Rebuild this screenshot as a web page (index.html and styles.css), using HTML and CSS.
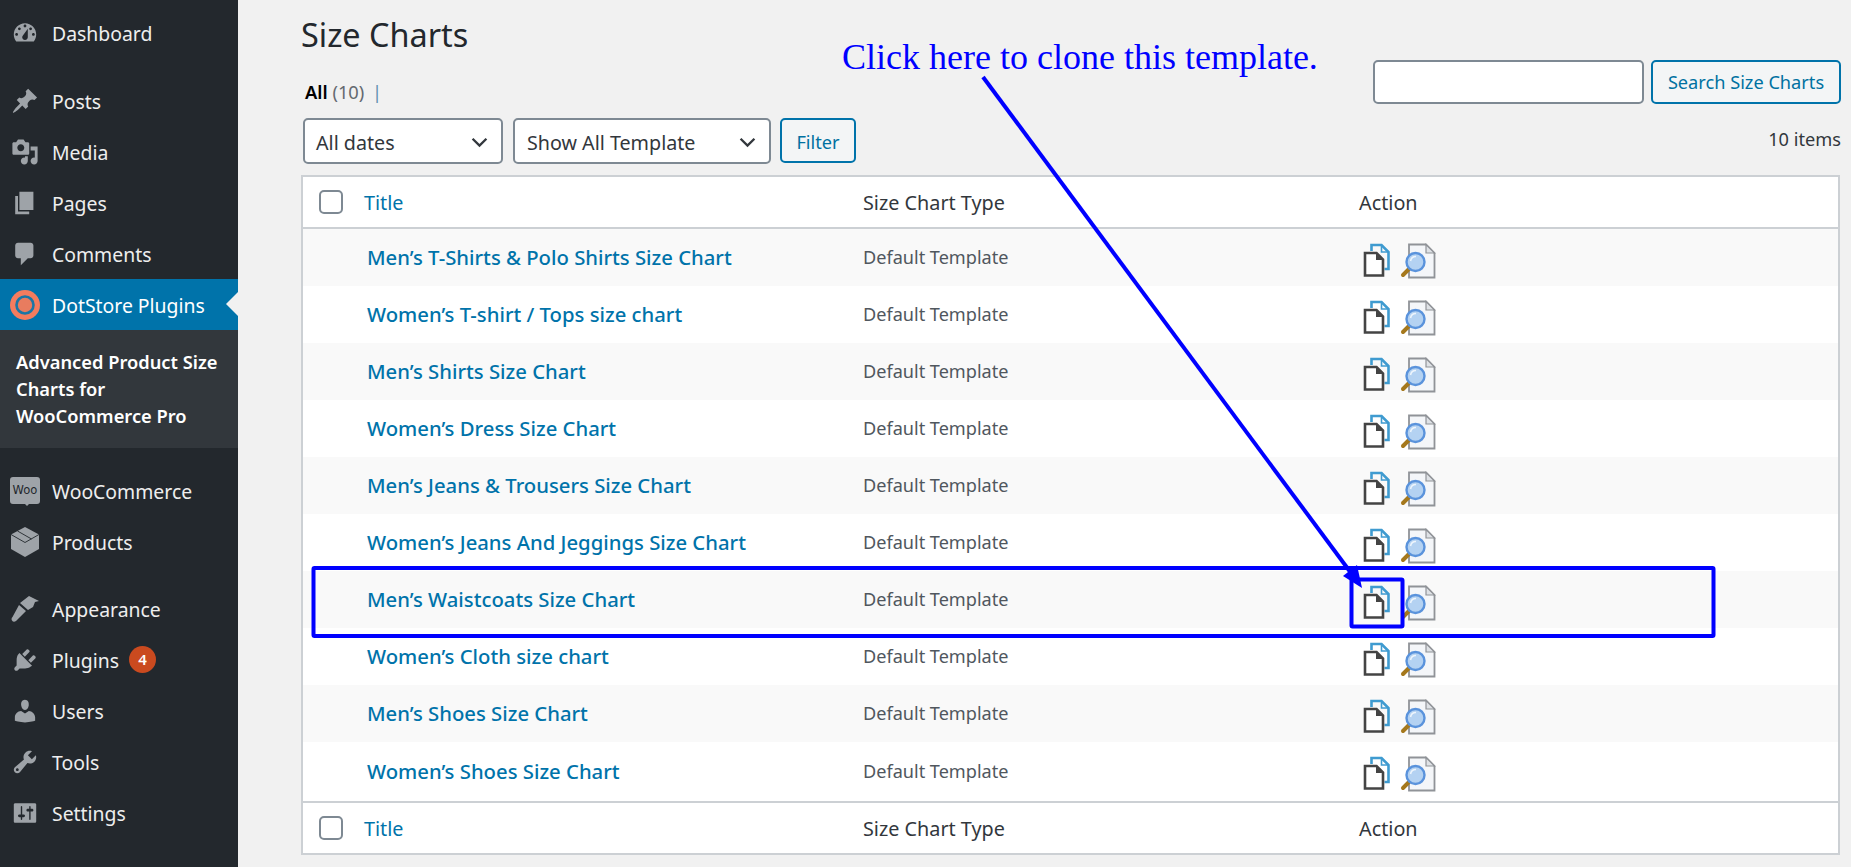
FILE: index.html
```html
<!DOCTYPE html>
<html lang="en">
<head>
    <meta charset="UTF-8">
    <title>Size Charts</title>
    <link rel="stylesheet" href="styles.css">
</head>
<body>
    <svg class="icon-defs" width="0" height="0">
        <symbol id="icon-clone" viewBox="0 0 28 34">
            <path d="M8.500 8V2h10l7 7v17h-4" fill="none" stroke="#3f9bd0" stroke-width="2.600"/>
            <path d="M18.500 2v7h7" fill="none" stroke="#3f9bd0" stroke-width="1.600"/>
            <path d="M2 10h11.500l6.500 6.500V32.500H2z" fill="#fff" stroke="#444" stroke-width="2.600"/>
            <path d="M13 10.500v6.500h6.500z" fill="#444"/>
        </symbol>
        <symbol id="icon-preview" viewBox="0 0 36 36">
            <path d="M9 1.500h17l8.500 8.500v24.500H9z" fill="#f4f6f9" stroke="#909398" stroke-width="1.800"/>
            <path d="M26 1.500V10h8.500z" fill="#dfe2e6" stroke="#909398" stroke-width="1.200"/>
            <path d="M9 26L3 32" stroke="#a5781c" stroke-width="4" stroke-linecap="round"/>
            <circle cx="15.500" cy="19" r="9" fill="#b4d2f2" stroke="#5a93dc" stroke-width="2.400"/>
            <path d="M10.500 18a5.500 5.500 0 0 1 5.500-4.500" fill="none" stroke="#eef5fc" stroke-width="1.600"/>
        </symbol>
    </svg>

    <div class="wrap">
        <!-- Admin menu -->
        <nav class="sidebar">
            <ul class="menu">
                <li class="menu-item">
                    <svg class="menu-icon" viewBox="0 0 20 20"><path fill-rule="evenodd" d="M3.760 16h12.480c1.100-1.370 1.760-3.110 1.760-5 0-4.420-3.580-8-8-8s-8 3.580-8 8c0 1.890.66 3.630 1.760 5zM10 4c.55 0 1 .45 1 1s-.45 1-1 1-1-.45-1-1 .45-1 1-1zM6 6c.55 0 1 .45 1 1s-.45 1-1 1-1-.45-1-1 .45-1 1-1zm8 0c.55 0 1 .45 1 1s-.45 1-1 1-1-.45-1-1 .45-1 1-1zm-5.370 5.550L12 7v6c0 1.100-.9 2-2 2s-2-.9-2-2c0-.57.24-1.080.63-1.450zM4 10c.55 0 1 .45 1 1s-.45 1-1 1-1-.45-1-1 .45-1 1-1zm12 0c.55 0 1 .45 1 1s-.45 1-1 1-1-.45-1-1 .45-1 1-1z"/></svg>
                    <span>Dashboard</span>
                </li>
            </ul>
            <ul class="menu">
                <li class="menu-item">
                    <svg class="menu-icon" viewBox="0 0 20 20"><path d="M10.440 3.020l1.820-1.820 6.360 6.350-1.830 1.820c-1.050-.68-2.480-.57-3.410.36l-.75.75c-.92.93-1.040 2.350-.35 3.410l-1.830 1.820-2.410-2.410-2.800 2.790c-.42.42-3.380 2.710-3.800 2.290s1.860-3.390 2.280-3.810l2.790-2.790L4.100 9.360l1.830-1.820c1.050.69 2.480.57 3.400-.36l.75-.75c.93-.92 1.050-2.350.36-3.410z"/></svg>
                    <span>Posts</span>
                </li>
                <li class="menu-item">
                    <svg class="menu-icon" viewBox="0 0 20 20"><path fill-rule="evenodd" d="M13 11V4c0-.55-.45-1-1-1h-1.670L9 1H5L3.670 3H2c-.55 0-1 .45-1 1v7c0 .55.45 1 1 1h10c.55 0 1-.45 1-1zM7 4.500c1.380 0 2.500 1.120 2.500 2.500S8.380 9.500 7 9.500 4.500 8.380 4.500 7 5.620 4.500 7 4.500zM14 6h5v10.500c0 1.380-1.120 2.500-2.500 2.500S14 17.880 14 16.500s1.120-2.500 2.500-2.500c.17 0 .34.020.5.050V9h-3V6zm-4 8.050V13h2v3.500c0 1.380-1.120 2.500-2.500 2.500S7 17.880 7 16.500 8.120 14 9.500 14c.17 0 .34.020.5.050z"/></svg>
                    <span>Media</span>
                </li>
                <li class="menu-item">
                    <svg class="menu-icon" viewBox="0 0 20 20"><path d="M6 15V2h10v13H6zm-1 1h8v2H3V5h2v11z"/></svg>
                    <span>Pages</span>
                </li>
                <li class="menu-item">
                    <svg class="menu-icon" viewBox="0 0 20 20"><path d="M5 2h9c1.100 0 2 .9 2 2v7c0 1.100-.9 2-2 2h-2l-5 5v-5H5c-1.100 0-2-.9-2-2V4c0-1.100.9-2 2-2z"/></svg>
                    <span>Comments</span>
                </li>
                <li class="menu-item is-current">
                    <svg class="menu-icon" viewBox="0 0 30 30">
                        <circle cx="15" cy="15" r="15" fill="#f47c5e"/>
                        <circle cx="15" cy="15" r="8.500" fill="#e87c5f" stroke="#1a76a6" stroke-width="2.600"/>
                    </svg>
                    <span>DotStore Plugins</span>
                </li>
            </ul>
            <div class="submenu">Advanced Product Size Charts for WooCommerce Pro</div>
            <ul class="menu menu-shop">
                <li class="menu-item">
                    <svg class="menu-icon menu-icon-wide" viewBox="0 0 30 30">
                        <path d="M3 1h24a3 3 0 0 1 3 3v21a3 3 0 0 1-3 3h-8l-2 2-2-2H3a3 3 0 0 1-3-3V4a3 3 0 0 1 3-3z"/>
                        <text class="woo-text" x="15" y="17.500" text-anchor="middle">Woo</text>
                    </svg>
                    <span>WooCommerce</span>
                </li>
                <li class="menu-item">
                    <svg class="menu-icon menu-icon-wide" viewBox="0 0 30 30">
                        <path d="M15 0l14 7.500V22l-14 8-14-8V7.500z"/>
                        <path d="M1 7.500l14 8 14-8M7.500 4l14 8" fill="none" stroke="#23282d" stroke-width=".9"/>
                    </svg>
                    <span>Products</span>
                </li>
            </ul>
            <ul class="menu">
                <li class="menu-item">
                    <svg class="menu-icon menu-icon-wide" viewBox="0 0 30 30">
                        <path d="M19 2l10 5-4 1-2 5-5 3-8-7zM9 11l7 6-10 10c-1.500 1-3 1-4-.5-.8-1.300-.5-2.500.5-3.500z"/>
                    </svg>
                    <span>Appearance</span>
                </li>
                <li class="menu-item">
                    <svg class="menu-icon" viewBox="0 0 20 20"><path d="M13.110 4.360L9.870 7.600 8 5.730l3.240-3.240c.35-.34 1.050-.2 1.560.32.52.51.66 1.210.31 1.550zm-8 1.770l.91-1.120 9.010 9.010-1.190.84c-.71.71-2.630 1.160-3.820 1.160H6.140L4.900 17.260c-.59.59-1.540.59-2.120 0-.59-.58-.59-1.530 0-2.120l1.240-1.240v-3.880c0-1.130.4-3.190 1.090-3.890zm7.260 3.970l3.240-3.240c.34-.35 1.040-.21 1.550.31.52.51.66 1.210.31 1.550l-3.240 3.250z"/></svg>
                    <span>Plugins</span>
                    <span class="badge">4</span>
                </li>
                <li class="menu-item">
                    <svg class="menu-icon" viewBox="0 0 20 20"><path d="M10 9.250c-2.270 0-2.730-3.440-2.730-3.440C7 4.020 7.820 2 9.970 2c2.160 0 2.980 2.020 2.710 3.810 0 0-.41 3.440-2.680 3.440zm0 2.570L12.720 10c2.390 0 4.520 2.330 4.520 4.530v2.490s-3.650 1.130-7.240 1.130c-3.650 0-7.240-1.130-7.240-1.130v-2.490c0-2.250 1.940-4.480 4.470-4.480z"/></svg>
                    <span>Users</span>
                </li>
                <li class="menu-item">
                    <svg class="menu-icon" viewBox="0 0 20 20"><path fill-rule="evenodd" d="M16.680 9.770c-1.340 1.340-3.300 1.670-4.950.99l-5.410 6.520c-.99.99-2.590.99-3.580 0s-.99-2.590 0-3.570l6.520-5.420c-.68-1.650-.35-3.610.99-4.950 1.280-1.280 3.120-1.620 4.720-1.060l-2.890 2.890 2.820 2.820 2.860-2.860c.53 1.580.18 3.390-1.080 4.640zM3.810 16.210c.4.390 1.040.39 1.430 0 .4-.4.4-1.040 0-1.430-.39-.4-1.030-.4-1.430 0-.39.39-.39 1.030 0 1.430z"/></svg>
                    <span>Tools</span>
                </li>
                <li class="menu-item">
                    <svg class="menu-icon" viewBox="0 0 20 20"><path fill-rule="evenodd" d="M18 16V4c0-.55-.45-1-1-1H3c-.55 0-1 .45-1 1v12c0 .55.45 1 1 1h14c.55 0 1-.45 1-1zM8 11h1c.55 0 1 .45 1 1s-.45 1-1 1H8v1.500c0 .28-.22.5-.5.5s-.5-.22-.5-.5V13H6c-.55 0-1-.45-1-1s.45-1 1-1h1V5.500c0-.28.22-.5.5-.5s.5.22.5.5V11zm5-2h-1c-.55 0-1-.45-1-1s.45-1 1-1h1V5.500c0-.28.22-.5.5-.5s.5.22.5.5V7h1c.55 0 1 .45 1 1s-.45 1-1 1h-1v5.500c0 .28-.22.5-.5.5s-.5-.22-.5-.5V9z"/></svg>
                    <span>Settings</span>
                </li>
            </ul>
        </nav>

        <!-- List table -->
        <main class="content">
            <div class="top-row">
                <div class="heading">
                    <h1>Size Charts</h1>
                    <div class="views"><strong>All</strong> <span class="count">(10)</span> <span class="sep">|</span></div>
                </div>
                <form class="search-box">
                    <input class="search-input" type="text">
                    <button class="btn search-btn" type="button">Search Size Charts</button>
                </form>
            </div>

            <div class="filter-row">
                <div class="filters">
                    <div class="select select-date">
                        <span>All dates</span>
                        <svg class="chevron" viewBox="0 0 16 10"><path d="M1.500 1.500L8 8l6.500-6.500" fill="none" stroke="#32373c" stroke-width="2.200"/></svg>
                    </div>
                    <div class="select select-template">
                        <span>Show All Template</span>
                        <svg class="chevron" viewBox="0 0 16 10"><path d="M1.500 1.500L8 8l6.500-6.500" fill="none" stroke="#32373c" stroke-width="2.200"/></svg>
                    </div>
                    <button class="btn filter-btn" type="button">Filter</button>
                </div>
                <div class="item-count">10 items</div>
            </div>

            <table class="charts">
                <thead>
                    <tr>
                        <th class="col-check"><input class="check" type="checkbox"></th>
                        <th class="col-title"><a href="#">Title</a></th>
                        <th class="col-type">Size Chart Type</th>
                        <th class="col-action">Action</th>
                    </tr>
                </thead>
                <tbody id="rows">
                    <tr><td></td><td class="name"><a href="#">Men’s T-Shirts &amp; Polo Shirts Size Chart</a></td><td class="type">Default Template</td><td class="actions"><svg class="ic-clone"><use href="#icon-clone"/></svg><svg class="ic-preview"><use href="#icon-preview"/></svg></td></tr>
                    <tr><td></td><td class="name"><a href="#">Women’s T-shirt / Tops size chart</a></td><td class="type">Default Template</td><td class="actions"><svg class="ic-clone"><use href="#icon-clone"/></svg><svg class="ic-preview"><use href="#icon-preview"/></svg></td></tr>
                    <tr><td></td><td class="name"><a href="#">Men’s Shirts Size Chart</a></td><td class="type">Default Template</td><td class="actions"><svg class="ic-clone"><use href="#icon-clone"/></svg><svg class="ic-preview"><use href="#icon-preview"/></svg></td></tr>
                    <tr><td></td><td class="name"><a href="#">Women’s Dress Size Chart</a></td><td class="type">Default Template</td><td class="actions"><svg class="ic-clone"><use href="#icon-clone"/></svg><svg class="ic-preview"><use href="#icon-preview"/></svg></td></tr>
                    <tr><td></td><td class="name"><a href="#">Men’s Jeans &amp; Trousers Size Chart</a></td><td class="type">Default Template</td><td class="actions"><svg class="ic-clone"><use href="#icon-clone"/></svg><svg class="ic-preview"><use href="#icon-preview"/></svg></td></tr>
                    <tr><td></td><td class="name"><a href="#">Women’s Jeans And Jeggings Size Chart</a></td><td class="type">Default Template</td><td class="actions"><svg class="ic-clone"><use href="#icon-clone"/></svg><svg class="ic-preview"><use href="#icon-preview"/></svg></td></tr>
                    <tr><td></td><td class="name"><a href="#">Men’s Waistcoats Size Chart</a></td><td class="type">Default Template</td><td class="actions"><svg class="ic-clone"><use href="#icon-clone"/></svg><svg class="ic-preview"><use href="#icon-preview"/></svg></td></tr>
                    <tr><td></td><td class="name"><a href="#">Women’s Cloth size chart</a></td><td class="type">Default Template</td><td class="actions"><svg class="ic-clone"><use href="#icon-clone"/></svg><svg class="ic-preview"><use href="#icon-preview"/></svg></td></tr>
                    <tr><td></td><td class="name"><a href="#">Men’s Shoes Size Chart</a></td><td class="type">Default Template</td><td class="actions"><svg class="ic-clone"><use href="#icon-clone"/></svg><svg class="ic-preview"><use href="#icon-preview"/></svg></td></tr>
                    <tr><td></td><td class="name"><a href="#">Women’s Shoes Size Chart</a></td><td class="type">Default Template</td><td class="actions"><svg class="ic-clone"><use href="#icon-clone"/></svg><svg class="ic-preview"><use href="#icon-preview"/></svg></td></tr>
                </tbody>
                <tfoot>
                    <tr>
                        <th class="col-check"><input class="check" type="checkbox"></th>
                        <th class="col-title"><a href="#">Title</a></th>
                        <th class="col-type">Size Chart Type</th>
                        <th class="col-action">Action</th>
                    </tr>
                </tfoot>
            </table>
        </main>
    </div>

    <!-- Blue annotation drawn on top of the screenshot -->
    <div class="note">Click here to clone this template.</div>
    <svg class="overlay" width="1851" height="867" viewBox="0 0 1851 867">
        <rect x="313.500" y="568" width="1400" height="68" fill="none" stroke="#0000ff" stroke-width="4" rx="1"/>
        <rect x="1351.500" y="579.500" width="51" height="47" fill="none" stroke="#0000ff" stroke-width="4" rx="1"/>
        <path d="M983 77L1354 577" stroke="#0000ff" stroke-width="4"/>
        <path d="M1343 576L1357 565L1362 588z" fill="#0000ff"/>
    </svg>
</body>
</html>
```

FILE: styles.css
```css
* {
    box-sizing: border-box;
}
html, body {
    height: 100%;
}
body {
    margin: 0;
    background: #f1f1f1;
    color: #32373c;
    font-family: "Noto Sans", Arial, sans-serif;
    font-size: 18px;
    overflow: hidden;
}
a {
    color: #0073aa;
    text-decoration: none;
}
.icon-defs {
    position: absolute;
}
.wrap {
    display: flex;
    height: 867px;
}

/* sidebar */
.sidebar {
    width: 238px;
    flex: none;
    background: #23282d;
    padding-top: 7px;
}
.menu {
    list-style: none;
    margin: 0 0 17px;
    padding: 0;
}
.menu-shop {
    margin-bottom: 16px;
}
.menu-item {
    position: relative;
    display: flex;
    align-items: center;
    height: 51px;
    padding-left: 11px;
    color: #eee;
    font-size: 19.400px;
}
.menu-item > span {
    padding-top: 1px;
}
.menu-icon {
    width: 28px;
    height: 28px;
    margin-right: 13px;
    flex: none;
    fill: #9ea3a8;
}
.menu-icon-wide {
    width: 30px;
    height: 30px;
    margin-left: -1px;
    margin-right: 12px;
}
.woo-text {
    font-family: "DejaVu Sans", sans-serif;
    font-size: 11.500px;
    fill: #23282d;
}
.is-current {
    background: #0073aa;
    color: #fff;
}
.is-current::after {
    content: "";
    position: absolute;
    right: 0;
    top: 13px;
    border: 12px solid transparent;
    border-left: 0;
    border-right-color: #f1f1f1;
}
.menu:has(.is-current) {
    margin-bottom: 0;
}
.is-current .menu-icon {
    width: 30px;
    height: 30px;
    margin-left: -1px;
    margin-right: 12px;
}
.submenu {
    background: #32373c;
    color: #fff;
    font-size: 18.300px;
    font-weight: 600;
    line-height: 27px;
    padding: 18px 10px 19px 16px;
    margin-bottom: 17px;
    height: 118px;
}
.menu-item > .badge {
    width: 27px;
    height: 27px;
    margin-left: 10px;
    padding: 0;
    border-radius: 50%;
    background: #ca4a1f;
    color: #fff;
    font-size: 15px;
    font-weight: 600;
    text-align: center;
    line-height: 27px;
}

/* main column */
.content {
    flex: 1;
    min-width: 0;
    padding: 0 10px 0 63px;
}
.top-row {
    display: flex;
    justify-content: space-between;
    height: 118px;
}
h1 {
    margin: 0;
    padding-top: 12px;
    font-size: 32.400px;
    font-weight: 400;
    line-height: 44px;
    color: #23282d;
}
.views {
    margin-top: 22px;
    padding-left: 4px;
    font-size: 18.300px;
    line-height: 28px;
    color: #646970;
}
.views strong {
    color: #000;
    font-weight: 600;
}
.sep {
    color: #5f8fae;
    margin-left: 3px;
}
.search-box {
    display: flex;
    gap: 7px;
    padding-top: 60px;
    height: 104px;
}
.search-input {
    width: 271px;
    height: 44px;
    border: 2px solid #7e8993;
    border-radius: 5px;
    background: #fff;
}
.btn {
    height: 44px;
    border: 2px solid #0073aa;
    border-radius: 5px;
    background: #f3f5f6;
    color: #0071a1;
    font-family: inherit;
    font-size: 18.200px;
    padding: 0;
}
.search-btn {
    width: 190px;
}
.filter-row {
    display: flex;
    justify-content: space-between;
    height: 57px;
}
.filters {
    display: flex;
    gap: 10px;
    padding-left: 2px;
}
.select {
    display: flex;
    align-items: center;
    justify-content: space-between;
    height: 46px;
    padding: 2px 13px 0 11px;
    border: 2px solid #7e8993;
    border-radius: 5px;
    background: #fff;
    font-size: 19.700px;
}
.select-date {
    width: 200px;
}
.select-template {
    width: 258px;
    padding-left: 12px;
}
.chevron {
    width: 17px;
    height: 11px;
}
.filter-btn {
    width: 76px;
    height: 45px;
    margin-left: -1px;
    padding-top: 2px;
}
.item-count {
    padding-top: 9px;
    font-size: 18.200px;
}

/* table */
.charts {
    width: 1539px;
    border-collapse: separate;
    border-spacing: 0;
    table-layout: fixed;
    background: #fff;
    border: 2px solid #ccd0d4;
}
.charts th {
    height: 52px;
    padding: 0 0 0 12px;
    text-align: left;
    font-weight: 400;
    font-size: 19.800px;
    color: #32373c;
}
.charts thead th {
    border-bottom: 2px solid #ccd0d4;
}
.charts tfoot th {
    height: 52px;
    border-top: 2px solid #ccd0d4;
}
.charts .col-check {
    width: 48px;
    padding: 0 0 0 16px;
}
.charts .col-title {
    width: 500px;
    padding-left: 13px;
}
.charts .col-type {
    width: 496px;
}
.check {
    appearance: none;
    display: block;
    width: 24px;
    height: 24px;
    margin: 0;
    border: 2px solid #7e8993;
    border-radius: 5px;
    background: #fff;
}
.charts td {
    height: 57px;
    padding: 0 0 0 12px;
}
.charts tbody tr:last-child td {
    height: 59px;
    padding-bottom: 2px;
}
.charts tbody tr:nth-child(odd) {
    background: #f9f9f9;
}
.charts .name {
    padding-left: 16px;
    padding-bottom: 2px;
    font-size: 20.300px;
    font-weight: 500;
}
.charts .type {
    padding-bottom: 2px;
    font-size: 18.100px;
    color: #50575e;
}
.charts .actions {
    vertical-align: top;
    padding-top: 14px;
    padding-left: 16px;
}
.ic-clone {
    width: 28px;
    height: 34px;
    margin-right: 9px;
    vertical-align: top;
}
.ic-preview {
    width: 36px;
    height: 36px;
    vertical-align: top;
}

/* annotation */
.note {
    position: absolute;
    left: 842px;
    top: 37px;
    color: #0000ff;
    font-family: "Liberation Serif", "Times New Roman", serif;
    font-size: 36px;
    line-height: 40px;
    white-space: nowrap;
}
.overlay {
    position: absolute;
    left: 0;
    top: 0;
    pointer-events: none;
}
```
